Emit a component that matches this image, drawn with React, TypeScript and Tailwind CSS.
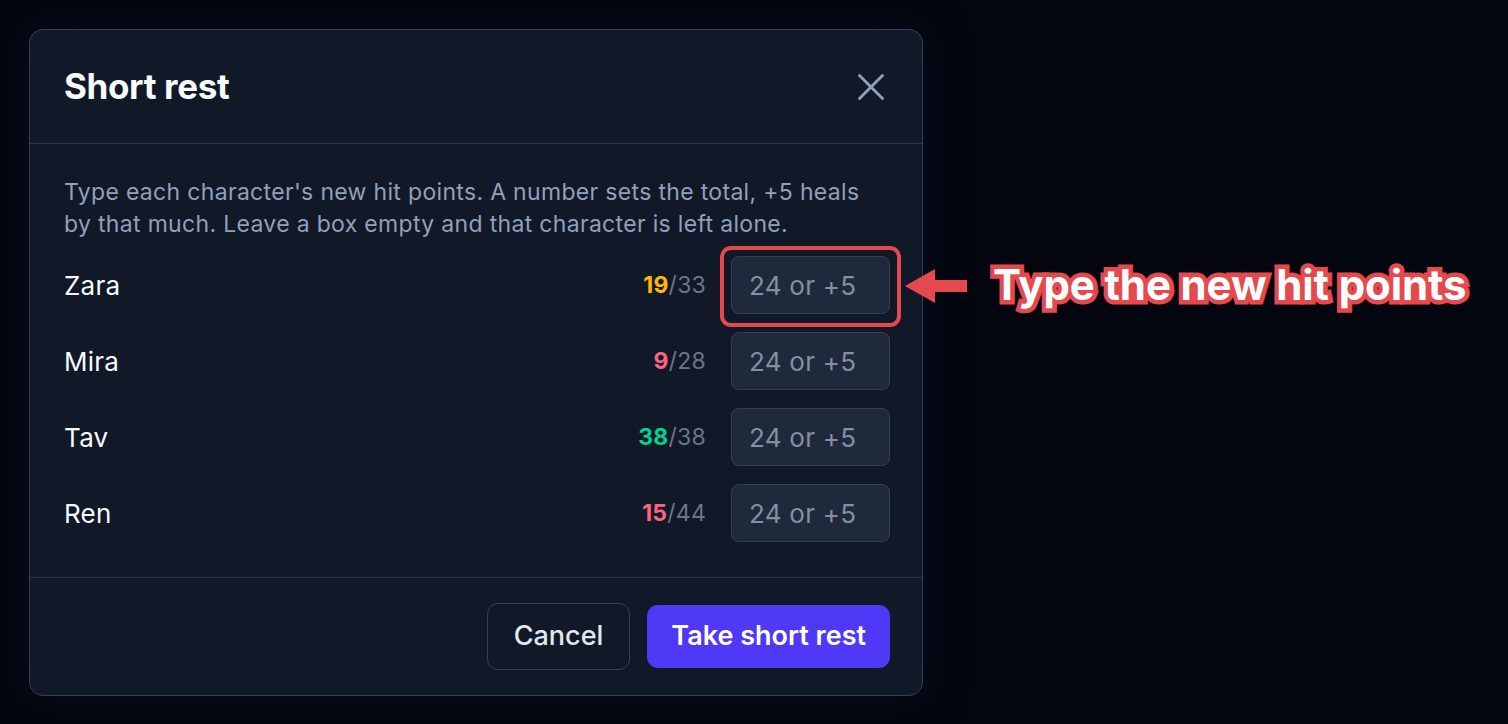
import React from 'react';
import { X } from 'lucide-react';

interface Member {
  name: string;
  hp: number;
  max: number;
  tone: string;
}

const party: Member[] = [
  { name: 'Zara', hp: 19, max: 33, tone: 'text-amber-400' },
  { name: 'Mira', hp: 9, max: 28, tone: 'text-rose-400' },
  { name: 'Tav', hp: 38, max: 38, tone: 'text-emerald-400' },
  { name: 'Ren', hp: 15, max: 44, tone: 'text-rose-400' },
];

export default function App() {
  return (
    <div className="relative w-[1508px] h-[724px] bg-[#03050f] overflow-hidden font-['Inter',sans-serif]">
      <div className="absolute left-[29px] top-[29px] w-[894px] rounded-[14px] border border-[#334155] bg-[#111827] shadow-[0_0_40px_rgba(15,23,42,0.6)]">
        <div className="flex items-center justify-between h-[114px] pl-[34px] pr-[32px] border-b border-[#283344]">
          <h2 className="text-[35px] font-bold text-slate-50 tracking-[-0.01em]">Short rest</h2>
          <button className="text-slate-400 -mr-[4px]">
            <X className="w-[46px] h-[46px]" strokeWidth={1.5} />
          </button>
        </div>

        <div className="pl-[34px] pr-[32px] pt-[32px] pb-[35px] border-b border-[#283344]">
          <p className="max-w-[815px] text-[23px] leading-[32px] tracking-[0.014em] text-slate-400 mb-[16px]">
            Type each character's new hit points. A number sets the total, +5 heals by that much. Leave a box empty and that character is left alone.
          </p>
          <div className="flex flex-col gap-[18px]">
            {party.map((m) => (
              <div key={m.name} className="flex items-center">
                <span className="flex-1 text-[26px] tracking-[0.01em] text-slate-50">{m.name}</span>
                <span className="text-[23px] tracking-[0.01em] mr-[25px]">
                  <span className={`font-bold ${m.tone}`}>{m.hp}</span>
                  <span className="text-[#6b7689]">/{m.max}</span>
                </span>
                <input
                  placeholder="24 or +5"
                  className="w-[159px] h-[58px] rounded-[8px] border border-[#334155] bg-[#1e293b] pl-[17px] pr-[12px] text-[26px] tracking-[0.01em] text-slate-100 placeholder:text-[#858fa1] outline-none"
                />
              </div>
            ))}
          </div>
        </div>

        <div className="flex items-center justify-end gap-[17px] h-[117px] pl-[34px] pr-[32px]">
          <button className="h-[67px] px-[26px] rounded-[11px] border border-[#334155] text-[27px] font-medium text-slate-200">
            Cancel
          </button>
          <button className="h-[63px] px-[24px] rounded-[11px] bg-indigo-600 text-[27px] font-semibold text-white">
            Take short rest
          </button>
        </div>
      </div>

      {/* annotation */}
      <div className="absolute left-[720px] top-[246px] w-[181px] h-[81px] rounded-[11px] border-[4px] border-[#e5484d]" />
      <svg className="absolute left-[903px] top-[268px]" width="70" height="36" viewBox="0 0 70 36">
        <path d="M2 18 L32 1 L32 12 L64 12 L64 24 L32 24 L32 35 Z" fill="#e5484d" />
      </svg>
      <div className="absolute left-[993px] top-[260px] text-[42px] leading-[50px] font-bold tracking-[-0.003em] text-white [-webkit-text-stroke:9px_#e5484d] [paint-order:stroke_fill]">
        Type the new hit points
      </div>
    </div>
  );
}
